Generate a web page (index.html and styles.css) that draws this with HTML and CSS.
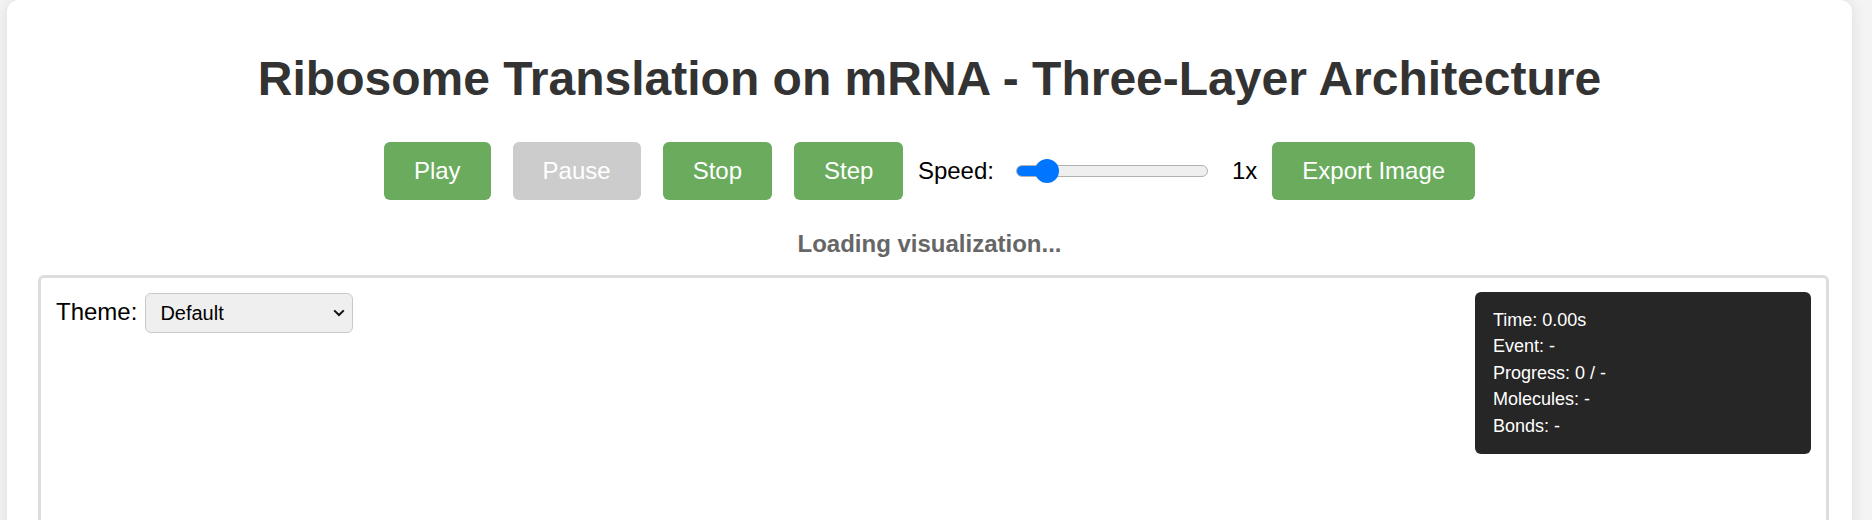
FILE: index.html
```html
<!DOCTYPE html>
<html lang="en">
<head>
<meta charset="utf-8">
<title>Ribosome Translation on mRNA - Three-Layer Architecture</title>
<link rel="stylesheet" href="styles.css">
</head>
<body>
  <div class="card">
    <h1 class="title">Ribosome Translation on mRNA - Three-Layer Architecture</h1>
    <div class="controls">
      <button class="btn">Play</button>
      <button class="btn btn-disabled gap-btn" disabled>Pause</button>
      <button class="btn gap-btn">Stop</button>
      <button class="btn gap-btn">Step</button>
      <span class="speed-label">Speed:</span>
      <input class="speed-slider" type="range" min="0.5" max="5" step="0.5" value="1">
      <span class="speed-value">1x</span>
      <button class="btn export-btn">Export Image</button>
    </div>
    <div class="loading">Loading visualization...</div>
    <div class="canvas-box">
      <div class="theme-row">
        <label class="theme-label" for="theme">Theme:</label>
        <div class="select-wrap">
          <select id="theme" class="theme-select">
            <option>Default</option>
          </select>
          <svg class="chevron" width="12" height="8" viewBox="0 0 12 8" aria-hidden="true">
            <path d="M1.2 1.4 L6 6 L10.8 1.4" fill="none" stroke="#111" stroke-width="2"/>
          </svg>
        </div>
      </div>
      <div class="info-panel">
        <div>Time: 0.00s</div>
        <div>Event: -</div>
        <div>Progress: 0 / -</div>
        <div>Molecules: -</div>
        <div>Bonds: -</div>
      </div>
    </div>
  </div>
</body>
</html>
```
FILE: styles.css
```css
html, body {
  margin: 0;
  height: 100%;
  overflow: hidden;
}

body {
  background: #f4f4f4;
  font-family: Arial, "Liberation Sans", sans-serif;
  padding: 0 20px 0 7px;
  box-sizing: border-box;
}

.card {
  background: #ffffff;
  border-radius: 12px;
  box-shadow: 0 0 15px rgba(0, 0, 0, 0.1);
  padding: 51px 31px 0 31px;
  min-height: 700px;
}

.title {
  margin: 0;
  font-size: 48px;
  line-height: 55px;
  font-weight: bold;
  color: #333333;
  text-align: center;
}

.controls {
  margin-top: 36px;
  display: flex;
  justify-content: center;
  align-items: center;
  height: 58px;
}

.btn {
  font-family: Arial, "Liberation Sans", sans-serif;
  font-size: 24px;
  line-height: 28px;
  height: 58px;
  padding: 0 30px;
  border: none;
  border-radius: 6px;
  background: #6aab5d;
  color: #ffffff;
  cursor: pointer;
}

.btn-disabled {
  background: #cccccc;
  color: #ffffff;
  cursor: default;
}

.gap-btn {
  margin-left: 22px;
}

.speed-label {
  margin-left: 14.5px;
  font-size: 24px;
  color: #000000;
}

.speed-slider {
  -webkit-appearance: none;
  appearance: none;
  box-sizing: border-box;
  width: 192px;
  height: 12px;
  margin: 0 0 0 22px;
  padding: 0;
  border: 1px solid #b2b2b2;
  border-radius: 6px;
  background: linear-gradient(to right, #0075ff 0, #0075ff 36px, #efefef 36px, #efefef 100%);
  outline: none;
}

.speed-slider::-webkit-slider-thumb {
  -webkit-appearance: none;
  appearance: none;
  width: 24px;
  height: 24px;
  border: none;
  border-radius: 50%;
  background: #0075ff;
}

.speed-value {
  margin-left: 24px;
  font-size: 24px;
  color: #000000;
}

.export-btn {
  margin-left: 15px;
}

.loading {
  margin-top: 30px;
  font-size: 24px;
  line-height: 28px;
  font-weight: bold;
  color: #666666;
  text-align: center;
}

.canvas-box {
  position: relative;
  box-sizing: border-box;
  width: 1791px;
  height: 700px;
  margin-top: 17px;
  border: 3px solid #dddddd;
  border-radius: 6px;
  background: #ffffff;
}

.theme-row {
  position: absolute;
  top: 15px;
  left: 15px;
  display: flex;
  align-items: baseline;
  gap: 8px;
}

.theme-label {
  font-size: 24px;
  color: #000000;
}

.select-wrap {
  position: relative;
}

.theme-select {
  -webkit-appearance: none;
  appearance: none;
  box-sizing: border-box;
  width: 208px;
  height: 40px;
  padding: 0 14px;
  font-family: Arial, "Liberation Sans", sans-serif;
  font-size: 20px;
  color: #000000;
  background: #efefef;
  border: 1px solid #c9c9c9;
  border-radius: 6px;
}

.chevron {
  position: absolute;
  right: 8px;
  top: 16px;
  pointer-events: none;
}

.info-panel {
  position: absolute;
  top: 14px;
  right: 15px;
  box-sizing: border-box;
  width: 336px;
  padding: 15px 18px;
  background: #262626;
  border-radius: 6px;
  color: #ffffff;
  font-size: 18px;
  line-height: 26.4px;
}
```
